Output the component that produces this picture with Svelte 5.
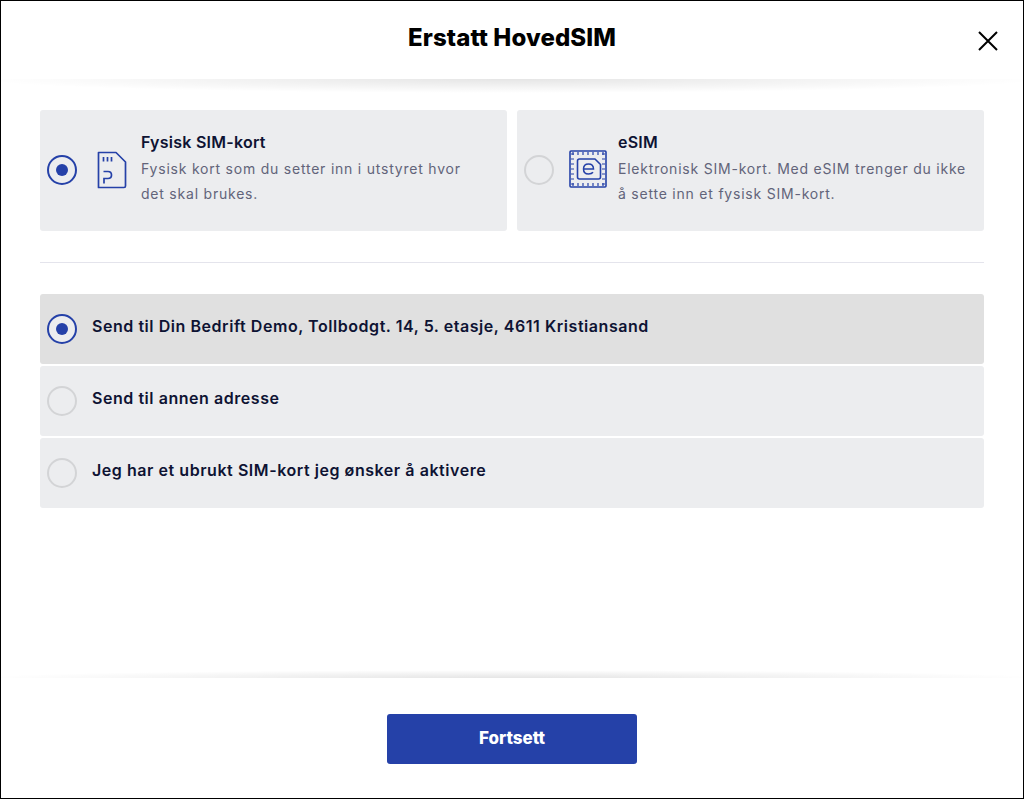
<script lang="ts">
	const simTypes = [
		{ id: 'physical', title: 'Fysisk SIM-kort', text: 'Fysisk kort som du setter inn i utstyret hvor det skal brukes.' },
		{ id: 'esim', title: 'eSIM', text: 'Elektronisk SIM-kort. Med eSIM trenger du ikke å sette inn et fysisk SIM-kort.' }
	];

	const deliveries = [
		'Send til Din Bedrift Demo, Tollbodgt. 14, 5. etasje, 4611 Kristiansand',
		'Send til annen adresse',
		'Jeg har et ubrukt SIM-kort jeg ønsker å aktivere'
	];

	const perforation = [0, 1, 2, 3, 4, 5, 6];

	let simType = $state('physical');
	let delivery = $state(0);
</script>

<div class="modal">
	<header class="header">
		<h1>Erstatt HovedSIM</h1>
		<button class="close" aria-label="Lukk">
			<svg width="20" height="20" viewBox="0 0 20 20">
				<path d="M1 1 L19 19 M19 1 L1 19" stroke="#000" stroke-width="2" fill="none" />
			</svg>
		</button>
	</header>

	<main class="content">
		<div class="sim-types">
			{#each simTypes as sim}
				<button class="card" onclick={() => (simType = sim.id)}>
					<span class="radio" class:checked={simType === sim.id}></span>
					<span class="icon">
						{#if sim.id === 'physical'}
							<svg width="30" height="38" viewBox="0 0 30 38" fill="none" stroke="#2541a8" stroke-width="1.7">
								<path d="M1.500 1.500 H19 L28.500 11 V35 Q28.500 36.500 27 36.500 H1.500 Z" stroke-linejoin="round" />
								<path d="M6.500 6 V10.500 M10.500 6 V10.500 M14.500 6 V10.500" />
								<path d="M6.500 20.500 H11 Q14.500 20.500 14.500 24 Q14.500 27.500 11 27.500 H7 V32.500" />
							</svg>
						{:else}
							<svg width="38" height="38" viewBox="0 0 38 38" fill="none" stroke="#2541a8">
								<rect x="1" y="1" width="36" height="36" rx="1" stroke-width="1.6" />
								{#each perforation as n}
									<path d={`M${4 + n * 5} 2 V5 M${4 + n * 5} 33 V36 M2 ${4 + n * 5} H5 M33 ${4 + n * 5} H36`} stroke-width="1.2" />
								{/each}
								<path d="M8.500 11 Q8.500 9 10.500 9 H26 L31.500 14.500 V27 Q31.500 29 29.500 29 H10.500 Q8.500 29 8.500 27 Z" stroke-width="1.6" stroke-linejoin="round" />
								<path d="M14.500 19 H24.500 Q24.500 14 19.500 14 Q14.500 14 14.500 19 Q14.500 24 19.500 24 Q22.800 24 24 22.300" stroke-width="1.5" />
							</svg>
						{/if}
					</span>
					<span class="card-body">
						<span class="card-title">{sim.title}</span>
						<span class="card-text">{sim.text}</span>
					</span>
				</button>
			{/each}
		</div>

		<hr class="divider" />

		<div class="deliveries">
			{#each deliveries as label, i}
				<button class="row" class:active={delivery === i} onclick={() => (delivery = i)}>
					<span class="radio" class:checked={delivery === i}></span>
					<span class="row-label">{label}</span>
				</button>
			{/each}
		</div>
	</main>

	<footer class="footer">
		<button class="primary">Fortsett</button>
	</footer>
</div>

<style>
	:global(body) {
		margin: 0;
		background: #fff;
	}

	.modal {
		box-sizing: border-box;
		width: 1024px;
		height: 799px;
		border: 1px solid #000;
		display: flex;
		flex-direction: column;
		font-family: Inter, Lato, sans-serif;
		color: #0e1333;
		background: #fff;
	}

	button {
		font-family: inherit;
		border: 0;
		padding: 0;
		cursor: pointer;
		text-align: left;
		color: inherit;
	}

	.header {
		position: relative;
		height: 78px;
		flex: none;
		display: flex;
		justify-content: center;
	}

	.header::after {
		content: '';
		position: absolute;
		left: 0;
		right: 0;
		top: 100%;
		height: 14px;
		background: radial-gradient(ellipse 52% 100% at 50% 0, rgba(0, 0, 0, 0.1), rgba(0, 0, 0, 0.03) 70%, rgba(0, 0, 0, 0));
	}

	h1 {
		margin: 21px 0 0;
		font-size: 24px;
		line-height: 32px;
		font-weight: 800;
		letter-spacing: 0.1px;
		color: #000;
	}

	.close {
		position: absolute;
		right: 25px;
		top: 30px;
		width: 20px;
		height: 20px;
		background: none;
	}

	.close svg {
		display: block;
	}

	.content {
		flex: 1;
		padding: 31px 39px 0;
	}

	.sim-types {
		display: grid;
		grid-template-columns: 1fr 1fr;
		gap: 10px;
	}

	.card {
		height: 121px;
		background: #ecedef;
		border-radius: 3px;
		display: flex;
		align-items: flex-start;
		padding: 0 7px;
	}

	.card .radio {
		margin-top: 45px;
	}

	.icon {
		height: 38px;
		margin-top: 41px;
		flex: none;
		display: flex;
	}

	.icon svg {
		display: block;
	}

	.card-body {
		display: flex;
		flex-direction: column;
		max-width: 340px;
		margin: 22px 0 0 14px;
	}

	.card:first-child .icon {
		width: 30px;
		margin-left: 20px;
	}

	.card:last-child .icon {
		width: 38px;
		margin-left: 15px;
		margin-top: 40px;
	}

	.card:last-child .card-body {
		max-width: 350px;
		margin-left: 11px;
	}

	.card-title {
		font-size: 16px;
		line-height: 21px;
		font-weight: 600;
		letter-spacing: 0.25px;
	}

	.card-text {
		margin-top: 3px;
		font-size: 14px;
		line-height: 25px;
		letter-spacing: 0.78px;
		color: #62647a;
	}

	.radio {
		box-sizing: border-box;
		flex: none;
		width: 30px;
		height: 30px;
		border-radius: 50%;
		border: 2px solid #d3d4d6;
		background: #ecedef;
		display: flex;
		align-items: center;
		justify-content: center;
	}

	.radio.checked {
		border-color: #2541a8;
	}

	.radio.checked::after {
		content: '';
		width: 12px;
		height: 12px;
		border-radius: 50%;
		background: #2541a8;
	}

	.divider {
		border: 0;
		height: 1px;
		background: #e4e4ec;
		margin: 31px 0;
	}

	.deliveries {
		display: flex;
		flex-direction: column;
		gap: 2px;
	}

	.row {
		height: 70px;
		background: #ecedef;
		border-radius: 3px;
		display: flex;
		align-items: center;
		gap: 15px;
		padding: 0 7px;
	}

	.row.active {
		background: #e0e0e0;
	}

	.row-label {
		font-size: 16px;
		font-weight: 600;
		letter-spacing: 0.55px;
		margin-top: -6px;
	}

	.footer {
		position: relative;
		height: 120px;
		flex: none;
		display: flex;
		justify-content: center;
		padding-top: 36px;
		box-sizing: border-box;
	}

	.footer::before {
		content: '';
		position: absolute;
		left: 0;
		right: 0;
		bottom: 100%;
		height: 8px;
		background: radial-gradient(ellipse 52% 100% at 50% 100%, rgba(0, 0, 0, 0.1), rgba(0, 0, 0, 0.03) 70%, rgba(0, 0, 0, 0));
	}

	.primary {
		width: 250px;
		height: 50px;
		padding-bottom: 2px;
		background: #2541a8;
		color: #fff;
		border-radius: 3px;
		font-size: 17px;
		font-weight: 800;
		text-align: center;
	}
</style>
